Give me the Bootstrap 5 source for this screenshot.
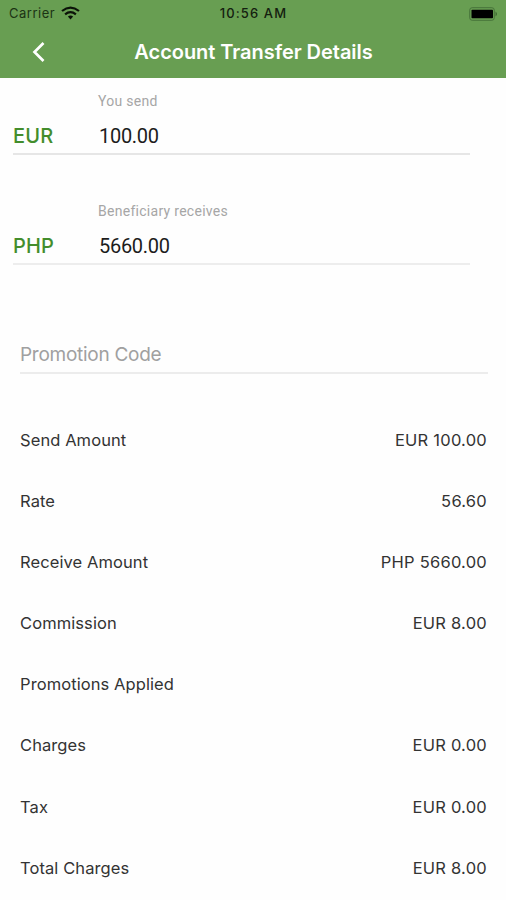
<!DOCTYPE html>
<html lang="en">
<head>
<meta charset="utf-8">
<meta name="viewport" content="width=device-width, initial-scale=1">
<title>Account Transfer Details</title>
<link href="https://cdn.jsdelivr.net/npm/bootstrap@5.3.0/dist/css/bootstrap.min.css" rel="stylesheet">
<style>
body{font-family:Inter,"Liberation Sans",sans-serif;color:#333;background:#fefefe}
.screen{width:506px;height:900px}
.topbar{height:78px;background:#689e52}
.status{height:27px;font-size:13px;line-height:27px;color:#1c3314;padding:0 8px 0 9px}
.status .side{flex:1 1 0}
.carrier{letter-spacing:.5px}
.wifi{margin-left:6px;margin-top:-2px}
.clock{font-weight:500;letter-spacing:1.1px;color:#14200f}
.titlebar{display:grid;grid-template-columns:78px 1fr 78px;height:50px}
.title{font-size:20px;font-weight:600;line-height:50px;letter-spacing:-.04px;padding-left:1px}
.money{margin:0 36px 0 13px;height:77px;border-bottom:2px solid #e6e6e6;padding-left:85px}
.money+.money{margin-top:33px;border-color:#ededed}
.hint{font-family:Roboto,sans-serif;font-size:14px;line-height:20px;color:#a6a6a6;padding-top:13px;letter-spacing:.28px}
.cur{width:86px;margin-left:-85px;color:#438d2c;font-weight:500;letter-spacing:.2px}
.amount{font-size:20px;line-height:24px;margin-top:13px}
.val{font-family:Roboto,sans-serif;color:#1c1c1c;letter-spacing:-.3px}
.promo{margin:75px 18px 0 20px;height:34px;border-bottom:2px solid #ececec;font-size:19px;line-height:30px;color:#a0a0a0;letter-spacing:-.27px}
.rows{padding:35.500px 19px 0 20px;font-size:16.5px;letter-spacing:.09px}
.rows>div{height:61.15px}
.rows span+span{letter-spacing:.24px}
</style>
</head>
<body>
<main class="screen overflow-hidden">
<header class="topbar">
<div class="status d-flex align-items-center">
<div class="side d-flex align-items-center"><span class="carrier">Carrier</span>
<svg class="wifi" width="19" height="14" viewBox="0 0 19 14" fill="none" stroke="#0b1208" stroke-width="2.200"><path d="M1 5Q9.500-1.900 18 5M4.100 8.400Q9.500 4 14.900 8.400"/><path d="M6.900 10.600Q9.500 8.600 12.100 10.600L9.500 13.500Z" fill="#0b1208" stroke="none"/></svg></div>
<span class="clock">10:56 AM</span>
<div class="side text-end"><svg width="29" height="15" viewBox="0 0 29 15"><rect x=".7" y=".7" width="24.600" height="12.600" rx="2.500" fill="none" stroke="#47733a"/><rect x="2.500" y="2.800" width="21.500" height="8.400" rx=".8" fill="#000"/><path d="M26.500 4.500q3 2.500 0 5z" fill="#3e6831"/></svg></div>
</div>
<div class="titlebar text-white text-center">
<div class="d-flex align-items-center justify-content-center"><svg width="14" height="22" viewBox="0 0 14 22" fill="none" stroke="#fff" stroke-width="2.700"><path d="M11.500 2 2.500 11l9 9"/></svg></div>
<div class="title text-nowrap">Account Transfer Details</div>
</div>
</header>
<section class="money"><div class="hint">You send</div><div class="amount d-flex"><span class="cur">EUR</span><span class="val">100.00</span></div></section>
<section class="money"><div class="hint">Beneficiary receives</div><div class="amount d-flex"><span class="cur">PHP</span><span class="val">5660.00</span></div></section>
<div class="promo"><span>Promotion Code</span></div>
<section class="rows">
<div class="d-flex align-items-center justify-content-between"><span>Send Amount</span><span>EUR 100.00</span></div>
<div class="d-flex align-items-center justify-content-between"><span>Rate</span><span>56.60</span></div>
<div class="d-flex align-items-center justify-content-between"><span>Receive Amount</span><span>PHP 5660.00</span></div>
<div class="d-flex align-items-center justify-content-between"><span>Commission</span><span>EUR 8.00</span></div>
<div class="d-flex align-items-center justify-content-between"><span>Promotions Applied</span></div>
<div class="d-flex align-items-center justify-content-between"><span>Charges</span><span>EUR 0.00</span></div>
<div class="d-flex align-items-center justify-content-between"><span>Tax</span><span>EUR 0.00</span></div>
<div class="d-flex align-items-center justify-content-between"><span>Total Charges</span><span>EUR 8.00</span></div>
</section>
</main>
<script src="https://cdn.jsdelivr.net/npm/bootstrap@5.3.0/dist/js/bootstrap.bundle.min.js"></script>
</body>
</html>
